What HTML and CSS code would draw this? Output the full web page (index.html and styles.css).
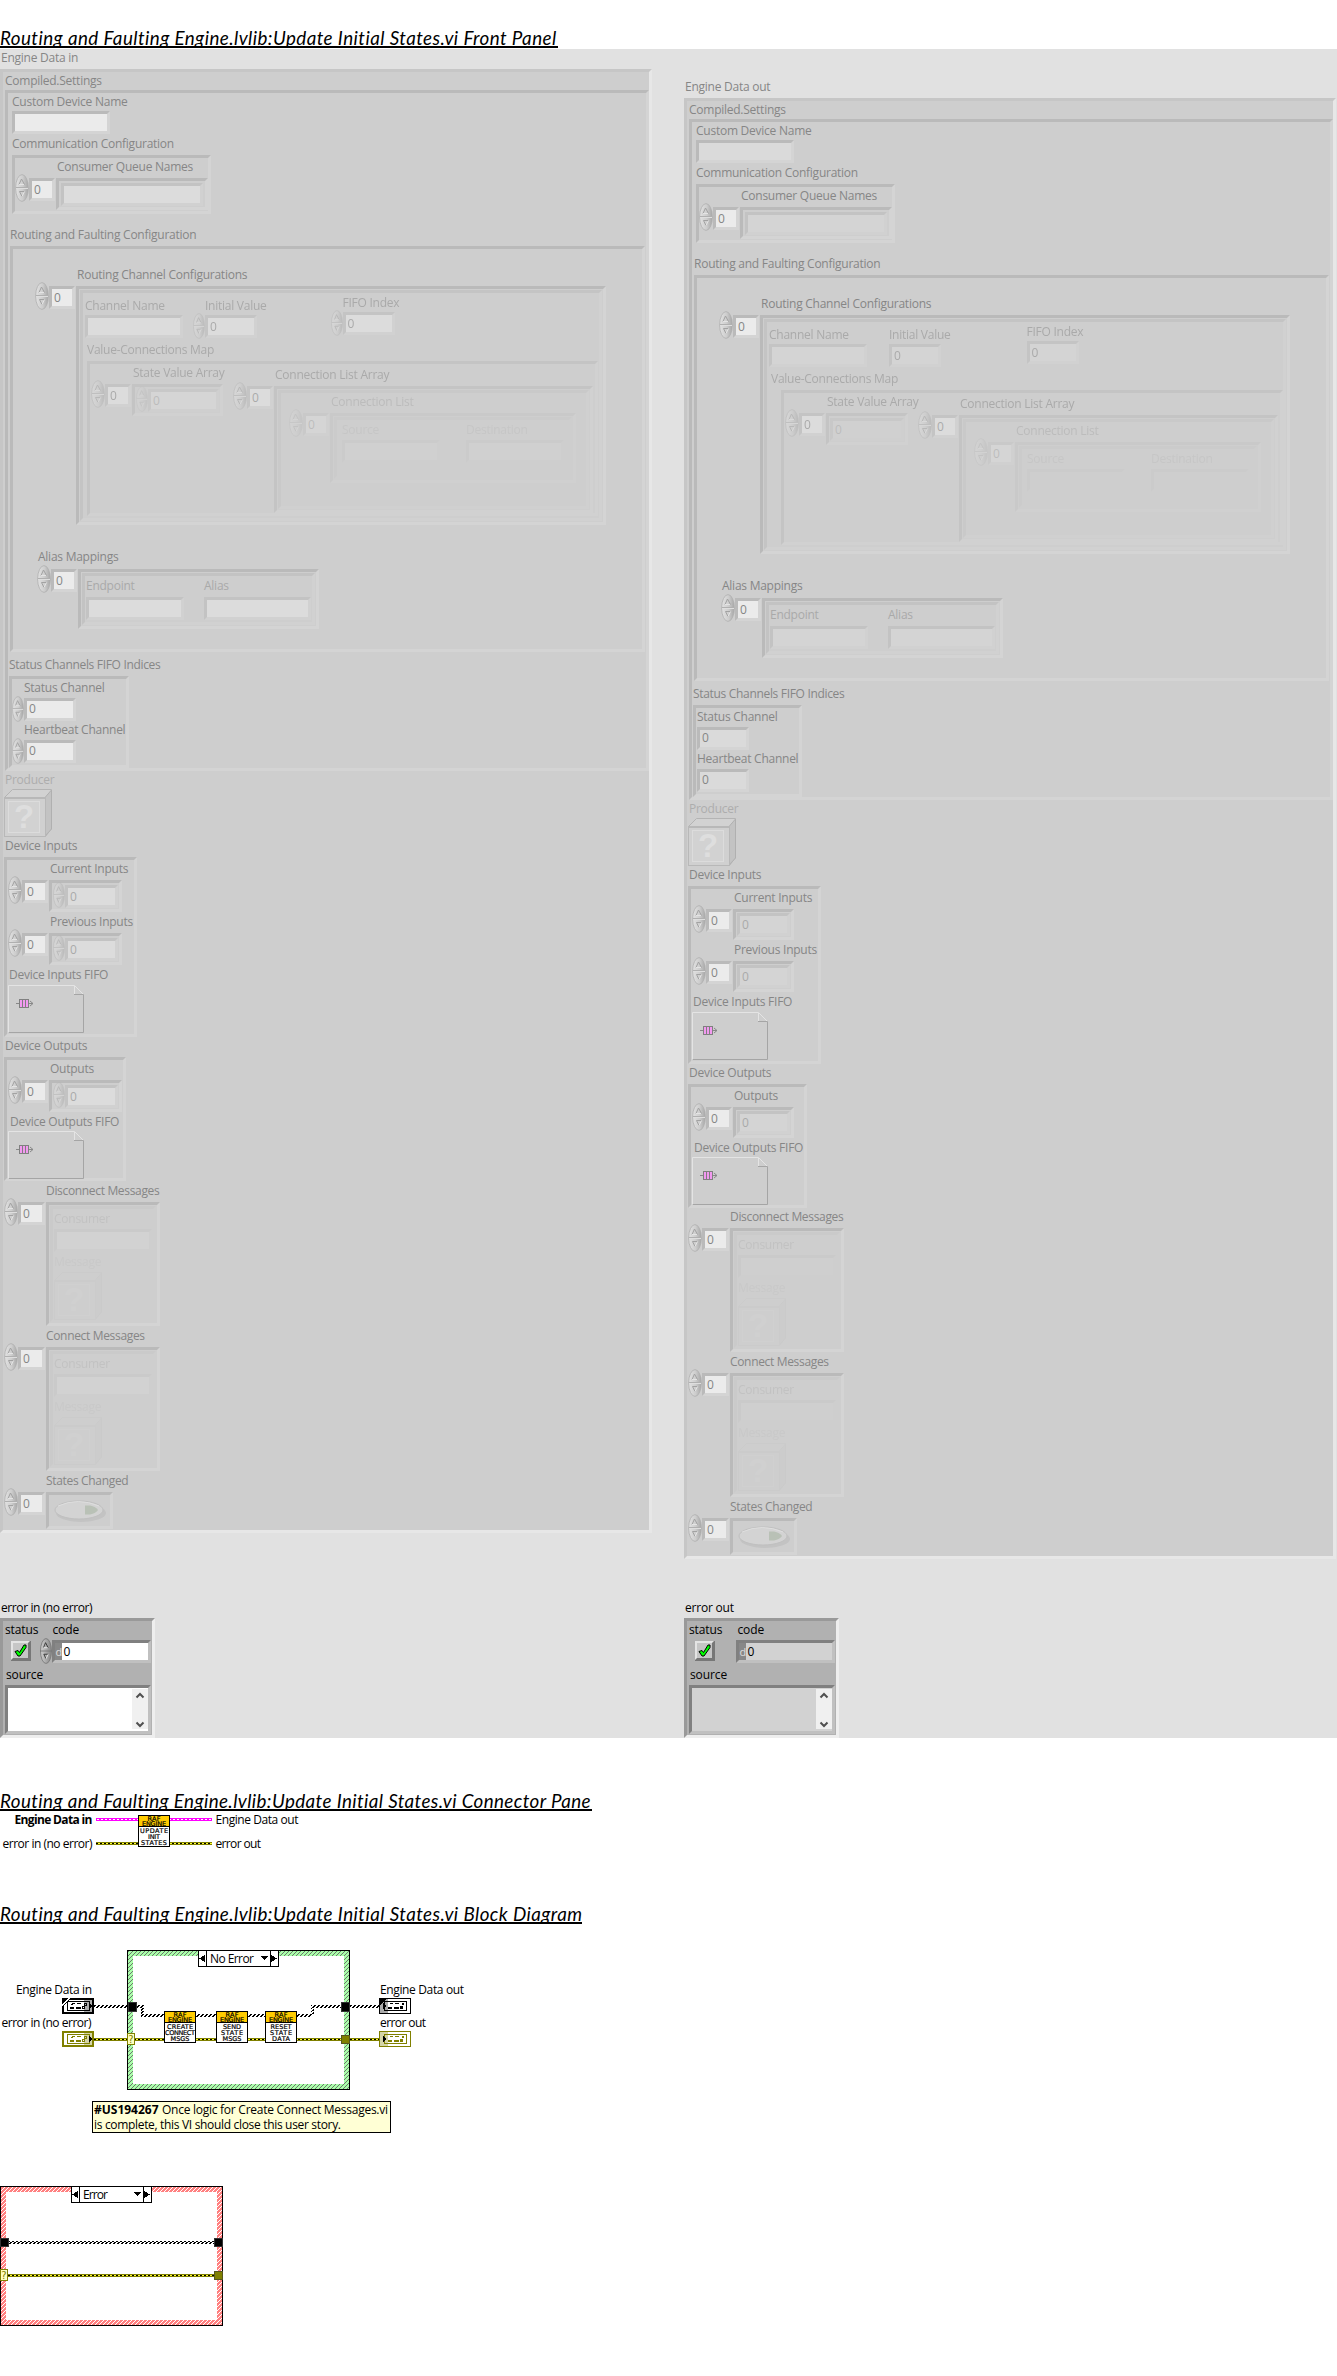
FILE: index.html
```
<!DOCTYPE html>
<html lang="en">
<head>
<meta charset="utf-8">
<title>Update Initial States.vi</title>
<link rel="stylesheet" href="styles.css">
</head>
<body>
<svg class="defs" width="0" height="0">
  <defs>
    <linearGradient id="knob" x1="0" x2="1" y1="0" y2="0"><stop offset="0" stop-color="#e2e2e2"/><stop offset=".55" stop-color="#cdcdcd"/><stop offset="1" stop-color="#a6a6a6"/></linearGradient>
    <linearGradient id="knobdark" x1="0" x2="1" y1="0" y2="0"><stop offset="0" stop-color="#d0d0d0"/><stop offset="1" stop-color="#858585"/></linearGradient>
    <symbol id="spin" viewBox="0 0 14 28" preserveAspectRatio="none"><ellipse cx="7" cy="14" rx="6.4" ry="13.4" fill="url(#knob)" stroke="#b0b0b0" stroke-width=".8"/><path d="M1 13.5h12" stroke="#b0b0b0"/><path d="M1 14.5h12" stroke="#dedede"/><path d="M4 10.500L6.500 5L9.500 10.500M9.500 17.500H4.500L7 22.500" fill="none" stroke="#a2a2a2"/><path d="M9.500 17.500L7 22.500M4 10.500h5" fill="none" stroke="#e4e4e4"/></symbol>
    <symbol id="spindark" viewBox="0 0 14 28" preserveAspectRatio="none"><ellipse cx="7" cy="14" rx="6.4" ry="13.4" fill="url(#knobdark)" stroke="#7a7a7a"/><path d="M0 14h14" stroke="#777"/><path d="M4 10.500L6.500 5L9.500 10.500M9.500 17.500H4.500L7 22.500" fill="none" stroke="#333"/><path d="M9.500 17.500L7 22.500M4 10.500h5" fill="none" stroke="#eee"/></symbol>
    <symbol id="cube" viewBox="0 0 48 48"><path d="M.5 8.500L8.500.5h39v39l-6 8" fill="#d2d2d2" stroke="#b4b4b4"/><path d="M41 8.500L47.500 1v39L41 47z" fill="#c3c3c3" stroke="#b0b0b0"/><rect x=".5" y="8.500" width="41" height="39" fill="#d0d0d0" stroke="#b8b8b8"/><path d="M1 9h40" stroke="#b8b8b8" stroke-width="2"/><rect x="4.500" y="12.500" width="31" height="31" fill="#d2d2d2" stroke="#dcdcdc"/><text x="20" y="39" text-anchor="middle" class="cube-mark">?</text></symbol>
    <symbol id="refnum" viewBox="0 0 76 48"><path d="M.5 47V.5h66L75.500 9.500" fill="none" stroke="#e4e4e4"/><path d="M66.500 1v8" stroke="#e4e4e4"/><path d="M66 9.500h9.500v38H1" fill="none" stroke="#a5a5a5"/><path d="M8 18.500h17M22 16l3 2.500l-3 2.500" fill="none" stroke="#888"/><rect x="11.500" y="14.500" width="9" height="8" fill="#f29af0" stroke="#808080"/><path d="M14.500 14v9M17.500 14v9" stroke="#808080"/></symbol>
    <symbol id="toggle" viewBox="0 0 61 31"><ellipse cx="32" cy="18" rx="25" ry="9" fill="#c3c3c3"/><ellipse cx="30" cy="15" rx="24" ry="9" fill="#d3d3d3" stroke="#c0c0c0"/><path d="M9 11q20-9 41 0" fill="none" stroke="#dedede"/><path d="M36 10.500h5q6 1 8 4.500q-2 3-8 4.500h-5z" fill="#b9c1b6"/></symbol>
    <symbol id="check" viewBox="0 0 20 20"><path d="M0 0h20v20H0z" fill="#777"/><path d="M0 0h19L17 2H2v15l-2 2z" fill="#e4e4e4"/><path d="M2 2h15v15H2z" fill="#c6c6c6"/><path d="M4 10.500l3-1l1.500 2L13 4h2v2.500L9 15H7z" fill="#0f0" stroke="#000"/></symbol>
    <symbol id="scroll" viewBox="0 0 16 40"><path d="M0 0h16v40H0z" fill="#f0f0f0"/><path d="M4.500 8.500L8 5l3.500 3.500M4.500 33.500L8 37l3.500-3.500" fill="none" stroke="#505050" stroke-width="2"/></symbol>
  </defs>
</svg>

<h1 class="title title-front"><span>Routing and Faulting Engine.lvlib:Update Initial States.vi Front Panel</span></h1>

<main class="front-panel">
  <section class="side side-in">
    <div class="label caption">Engine Data in</div>
    <div class="cluster engine">
      <div class="label ind-2">Compiled.Settings</div>
      <div class="cluster compiled">
        <div class="label ind-4">Custom Device Name</div>
        <div class="box text ind-4"></div>
        <div class="label ind-4 after-box">Communication Configuration</div>
        <div class="cluster comm">
          <div class="label over-array">Consumer Queue Names</div>
          <div class="array"><svg class="spin"><use href="#spin"/></svg><div class="box idx">0</div><div class="body queue"><div class="box"></div></div></div>
        </div>
        <div class="label ind-2 routing-label">Routing and Faulting Configuration</div>
        <div class="cluster routing">
          <div class="label over-array channels-label">Routing Channel Configurations</div>
          <div class="array channels"><svg class="spin"><use href="#spin"/></svg><div class="box idx">0</div>
            <div class="body channels-body"><div class="cluster element channel">
              <div class="row fields">
                <div class="field"><div class="label">Channel Name</div><div class="box text"></div></div>
                <div class="field initial"><div class="label">Initial Value</div><div class="row"><svg class="spin small"><use href="#spin"/></svg><div class="box num">0</div></div></div>
                <div class="field fifo"><div class="label">FIFO Index</div><div class="row"><svg class="spin small"><use href="#spin"/></svg><div class="box num">0</div></div></div>
              </div>
              <div class="label map-label">Value-Connections Map</div>
              <div class="cluster row map">
                <div class="state">
                  <div class="label over-array">State Value Array</div>
                  <div class="array"><svg class="spin"><use href="#spin"/></svg><div class="box idx">0</div><div class="body values"><svg class="spin small"><use href="#spin"/></svg><div class="box">0</div></div></div>
                </div>
                <div class="connections">
                  <div class="label over-array">Connection List Array</div>
                  <div class="array"><svg class="spin"><use href="#spin"/></svg><div class="box idx">0</div>
                    <div class="body lists-body"><div class="cluster element lists">
                      <div class="label over-array">Connection List</div>
                      <div class="array"><svg class="spin"><use href="#spin"/></svg><div class="box idx">0</div>
                        <div class="body pairs-body"><div class="cluster element row pairs">
                          <div class="field"><div class="label">Source</div><div class="box text"></div></div>
                          <div class="field"><div class="label">Destination</div><div class="box text"></div></div>
                        </div></div>
                      </div>
                    </div></div>
                  </div>
                </div>
              </div>
            </div></div>
          </div>
          <div class="label alias-label">Alias Mappings</div>
          <div class="array alias"><svg class="spin"><use href="#spin"/></svg><div class="box idx">0</div>
            <div class="body alias-body"><div class="cluster element row aliases">
              <div class="field"><div class="label">Endpoint</div><div class="box text"></div></div>
              <div class="field"><div class="label">Alias</div><div class="box text wide"></div></div>
            </div></div>
          </div>
        </div>
        <div class="label ind-1 status-label">Status Channels FIFO Indices</div>
        <div class="cluster status">
          <div class="label">Status Channel</div>
          <div class="row"><svg class="spin small"><use href="#spin"/></svg><div class="box num">0</div></div>
          <div class="label">Heartbeat Channel</div>
          <div class="row"><svg class="spin small"><use href="#spin"/></svg><div class="box num">0</div></div>
        </div>
      </div>
      <div class="label ind-2 faded">Producer</div>
      <svg class="cube"><use href="#cube"/></svg>
      <div class="label ind-2">Device Inputs</div>
      <div class="cluster device inputs">
        <div class="label over-array">Current Inputs</div>
        <div class="array"><svg class="spin"><use href="#spin"/></svg><div class="box idx">0</div><div class="body numeric"><svg class="spin small"><use href="#spin"/></svg><div class="box">0</div></div></div>
        <div class="label over-array next">Previous Inputs</div>
        <div class="array"><svg class="spin"><use href="#spin"/></svg><div class="box idx">0</div><div class="body numeric"><svg class="spin small"><use href="#spin"/></svg><div class="box">0</div></div></div>
        <div class="label next ind-2">Device Inputs FIFO</div>
        <svg class="refnum"><use href="#refnum"/></svg>
      </div>
      <div class="label ind-2">Device Outputs</div>
      <div class="cluster device outputs">
        <div class="label over-array">Outputs</div>
        <div class="array"><svg class="spin"><use href="#spin"/></svg><div class="box idx">0</div><div class="body numeric"><svg class="spin small"><use href="#spin"/></svg><div class="box">0</div></div></div>
        <div class="label next ind-3">Device Outputs FIFO</div>
        <svg class="refnum"><use href="#refnum"/></svg>
      </div>
      <div class="label over-array first-message">Disconnect Messages</div>
      <div class="array"><svg class="spin"><use href="#spin"/></svg><div class="box idx">0</div>
        <div class="body message"><div class="cluster element"><div class="label">Consumer</div><div class="box text"></div><div class="label faint">Message</div><svg class="cube"><use href="#cube"/></svg></div></div>
      </div>
      <div class="label over-array next">Connect Messages</div>
      <div class="array"><svg class="spin"><use href="#spin"/></svg><div class="box idx">0</div>
        <div class="body message"><div class="cluster element"><div class="label">Consumer</div><div class="box text"></div><div class="label faint">Message</div><svg class="cube"><use href="#cube"/></svg></div></div>
      </div>
      <div class="label over-array next">States Changed</div>
      <div class="array"><svg class="spin"><use href="#spin"/></svg><div class="box idx">0</div><div class="body states"><svg class="toggle"><use href="#toggle"/></svg></div></div>
    </div>
    <div class="label error-label">error in (no error)</div>
    <div class="error">
      <div class="row error-top">
        <div class="field"><div class="label">status</div><svg class="check"><use href="#check"/></svg></div>
        <div class="field code"><div class="label">code</div><div class="row"><svg class="spin small"><use href="#spindark"/></svg><div class="ebox"><i>d</i><b>0</b></div></div></div>
      </div>
      <div class="label source-label">source</div>
      <div class="ebox source"><svg class="scroll"><use href="#scroll"/></svg></div>
    </div>
  </section>

  <section class="side side-out">
    <div class="label caption">Engine Data out</div>
    <div class="cluster engine">
      <div class="label ind-2">Compiled.Settings</div>
      <div class="cluster compiled">
        <div class="label ind-4">Custom Device Name</div>
        <div class="box text ind-4"></div>
        <div class="label ind-4 after-box">Communication Configuration</div>
        <div class="cluster comm">
          <div class="label over-array">Consumer Queue Names</div>
          <div class="array"><svg class="spin"><use href="#spin"/></svg><div class="box idx">0</div><div class="body queue"><div class="box"></div></div></div>
        </div>
        <div class="label ind-2 routing-label">Routing and Faulting Configuration</div>
        <div class="cluster routing">
          <div class="label over-array channels-label">Routing Channel Configurations</div>
          <div class="array channels"><svg class="spin"><use href="#spin"/></svg><div class="box idx">0</div>
            <div class="body channels-body"><div class="cluster element channel">
              <div class="row fields">
                <div class="field"><div class="label">Channel Name</div><div class="box text"></div></div>
                <div class="field initial"><div class="label">Initial Value</div><div class="box num">0</div></div>
                <div class="field fifo"><div class="label">FIFO Index</div><div class="box num">0</div></div>
              </div>
              <div class="label map-label">Value-Connections Map</div>
              <div class="cluster row map">
                <div class="state">
                  <div class="label over-array">State Value Array</div>
                  <div class="array"><svg class="spin"><use href="#spin"/></svg><div class="box idx">0</div><div class="body values"><div class="box">0</div></div></div>
                </div>
                <div class="connections">
                  <div class="label over-array">Connection List Array</div>
                  <div class="array"><svg class="spin"><use href="#spin"/></svg><div class="box idx">0</div>
                    <div class="body lists-body"><div class="cluster element lists">
                      <div class="label over-array">Connection List</div>
                      <div class="array"><svg class="spin"><use href="#spin"/></svg><div class="box idx">0</div>
                        <div class="body pairs-body"><div class="cluster element row pairs">
                          <div class="field"><div class="label">Source</div><div class="box text"></div></div>
                          <div class="field"><div class="label">Destination</div><div class="box text"></div></div>
                        </div></div>
                      </div>
                    </div></div>
                  </div>
                </div>
              </div>
            </div></div>
          </div>
          <div class="label alias-label">Alias Mappings</div>
          <div class="array alias"><svg class="spin"><use href="#spin"/></svg><div class="box idx">0</div>
            <div class="body alias-body"><div class="cluster element row aliases">
              <div class="field"><div class="label">Endpoint</div><div class="box text"></div></div>
              <div class="field"><div class="label">Alias</div><div class="box text wide"></div></div>
            </div></div>
          </div>
        </div>
        <div class="label ind-1 status-label">Status Channels FIFO Indices</div>
        <div class="cluster status">
          <div class="label">Status Channel</div>
          <div class="row"><div class="box num">0</div></div>
          <div class="label">Heartbeat Channel</div>
          <div class="row"><div class="box num">0</div></div>
        </div>
      </div>
      <div class="label ind-2 faded">Producer</div>
      <svg class="cube"><use href="#cube"/></svg>
      <div class="label ind-2">Device Inputs</div>
      <div class="cluster device inputs">
        <div class="label over-array">Current Inputs</div>
        <div class="array"><svg class="spin"><use href="#spin"/></svg><div class="box idx">0</div><div class="body numeric"><div class="box">0</div></div></div>
        <div class="label over-array next">Previous Inputs</div>
        <div class="array"><svg class="spin"><use href="#spin"/></svg><div class="box idx">0</div><div class="body numeric"><div class="box">0</div></div></div>
        <div class="label next ind-2">Device Inputs FIFO</div>
        <svg class="refnum"><use href="#refnum"/></svg>
      </div>
      <div class="label ind-2">Device Outputs</div>
      <div class="cluster device outputs">
        <div class="label over-array">Outputs</div>
        <div class="array"><svg class="spin"><use href="#spin"/></svg><div class="box idx">0</div><div class="body numeric"><div class="box">0</div></div></div>
        <div class="label next ind-3">Device Outputs FIFO</div>
        <svg class="refnum"><use href="#refnum"/></svg>
      </div>
      <div class="label over-array first-message">Disconnect Messages</div>
      <div class="array"><svg class="spin"><use href="#spin"/></svg><div class="box idx">0</div>
        <div class="body message"><div class="cluster element"><div class="label">Consumer</div><div class="box text"></div><div class="label faint">Message</div><svg class="cube"><use href="#cube"/></svg></div></div>
      </div>
      <div class="label over-array next">Connect Messages</div>
      <div class="array"><svg class="spin"><use href="#spin"/></svg><div class="box idx">0</div>
        <div class="body message"><div class="cluster element"><div class="label">Consumer</div><div class="box text"></div><div class="label faint">Message</div><svg class="cube"><use href="#cube"/></svg></div></div>
      </div>
      <div class="label over-array next">States Changed</div>
      <div class="array"><svg class="spin"><use href="#spin"/></svg><div class="box idx">0</div><div class="body states"><svg class="toggle"><use href="#toggle"/></svg></div></div>
    </div>
    <div class="label error-label">error out</div>
    <div class="error">
      <div class="row error-top">
        <div class="field"><div class="label">status</div><svg class="check"><use href="#check"/></svg></div>
        <div class="field code"><div class="label">code</div><div class="ebox"><i>d</i><b>0</b></div></div>
      </div>
      <div class="label source-label">source</div>
      <div class="ebox source"><svg class="scroll"><use href="#scroll"/></svg></div>
    </div>
  </section>
</main>

<h2 class="title title-pane"><span>Routing and Faulting Engine.lvlib:Update Initial States.vi Connector Pane</span></h2>

<svg class="pane" width="1337" height="49" viewBox="0 1811 1337 49">
  <g class="t">
    <text x="14.500" y="1824" textLength="78" class="bold">Engine Data in</text>
    <text x="2.500" y="1848" textLength="90">error in (no error)</text>
    <text x="215.500" y="1824" textLength="83">Engine Data out</text>
    <text x="215.500" y="1848" textLength="45.500">error out</text>
  </g>
  <path class="pink" d="M96 1819.500H212"/><path class="pink-dots" d="M97 1819.500H212"/>
  <path class="olive" d="M96 1843.500H212"/><path class="lemon" d="M96 1843.500H212"/><path class="dots" d="M96 1843.500H212"/>
  <g class="vi" transform="translate(138 1815)"><path d="M.5.5h31v31H.5z" fill="#fff" stroke="#000"/><path d="M1 1h30v10H1z" fill="#fc0"/><path d="M0 11.500h32" stroke="#000"/><text x="16" y="6" textLength="13">RAF</text><text x="16" y="11" textLength="24">ENGINE</text><text x="16" y="18" textLength="28">UPDATE</text><text x="16" y="24" textLength="12">INIT</text><text x="16" y="30" textLength="26">STATES</text></g>
</svg>

<h2 class="title title-diagram"><span>Routing and Faulting Engine.lvlib:Update Initial States.vi Block Diagram</span></h2>

<svg class="diagram" width="1337" height="452" viewBox="0 1924 1337 452">
  <defs>
    <pattern id="hgreen" width="4" height="4" patternUnits="userSpaceOnUse"><path d="M0 0h4v4H0z" fill="#afa"/><path d="M3 0h1v1h-1zM2 1h1v1h-1zM1 2h1v1h-1zM0 3h1v1h-1z" fill="#6c786c"/></pattern>
    <pattern id="hred" width="4" height="4" patternUnits="userSpaceOnUse"><path d="M0 0h4v4H0z" fill="#ff8080"/><path d="M3 0h1v1h-1zM2 1h1v1h-1zM1 2h1v1h-1zM0 3h1v1h-1z" fill="#fff"/></pattern>
    <pattern id="wire" width="4" height="3" y="2005" patternUnits="userSpaceOnUse"><path d="M2 0h2v1h-2zM1 1h2v1h-2zM0 2h2v1h-2z"/></pattern>
    <g id="term"><path d="M5.500 3.500h22v9h-22zM1 1h30v14H1z" fill="none" stroke="currentColor"/><path d="M8 9h4v2H8zM14 9h5v2h-5zM10 5h3v1h-3zM15 5h4v1h-4zM9 6h2v1H9z" fill="currentColor"/><path d="M22.500 5.500h2v2h-2zM20.500 8.500h2v2h-2z" fill="none" stroke="currentColor"/></g>
    <g id="sub"><path d="M.5.5h31v31H.5z" fill="#fff" stroke="#000"/><path d="M1 1h30v10H1z" fill="#fc0"/><path d="M0 11.500h32" stroke="#000"/></g>
  </defs>

  <!-- No Error case -->
  <path d="M127.500 1950.500h222v139h-222z" fill="url(#hgreen)" stroke="#000"/>
  <path d="M133 1956h211v128H133z" fill="#fff"/>
  <g id="selector"><path d="M198.500 1950.500h80v16h-80z" fill="#fff" stroke="#000"/><path d="M206.500 1950v17M270.500 1950v17" stroke="#000"/><path d="M205 1955v7l-6-3.500zM271 1955v7l6-3.500zM261 1956h7l-3.500 4z"/></g>
  <text class="t" x="210" y="1963" textLength="44">No Error</text>

  <path d="M94 2005h47v3H94zM141 2005h2.500v9H141zM141 2014h23v3h-23zM196 2014h20v3h-20zM248 2014h17v3h-17zM297 2014h14v3h-14zM310.500 2005h3v10h-3zM311 2005h68v3h-68z" fill="url(#wire)"/>
  <path class="olive" d="M94 2039.500H379"/><path class="lemon" d="M94 2039.500H379"/><path class="dots" d="M94 2039.500H379"/>

  <path d="M128 2002h8v9h-8zM341.500 2002h8v9h-8z" fill="#000" stroke="#333"/>
  <path d="M127.500 2033.500h7v11h-7z" fill="#ffffc0" stroke="#808000"/><text class="q" x="131" y="2043">?</text>
  <path d="M341.500 2035.500h8v8h-8z" fill="#808000" stroke="#555520"/>

  <g class="vi"><g transform="translate(164 2011)"><use href="#sub"/><text x="16" y="6" textLength="13">RAF</text><text x="16" y="11" textLength="24">ENGINE</text><text x="16" y="18" textLength="26">CREATE</text><text x="16" y="24" textLength="30">CONNECT</text><text x="16" y="30" textLength="19">MSGS</text></g>
  <g transform="translate(216 2011)"><use href="#sub"/><text x="16" y="6" textLength="13">RAF</text><text x="16" y="11" textLength="24">ENGINE</text><text x="16" y="18" textLength="18">SEND</text><text x="16" y="24" textLength="22">STATE</text><text x="16" y="30" textLength="19">MSGS</text></g>
  <g transform="translate(265 2011)"><use href="#sub"/><text x="16" y="6" textLength="13">RAF</text><text x="16" y="11" textLength="24">ENGINE</text><text x="16" y="18" textLength="21">RESET</text><text x="16" y="24" textLength="22">STATE</text><text x="16" y="30" textLength="18">DATA</text></g></g>

  <g transform="translate(62 1998)" color="#000"><path d="M0 0h32v16H0z"/><path d="M2 2h28v12H2z" fill="#fff"/><path d="M22 2h8v12h-8z" fill="#aaa"/><use href="#term"/><path d="M27 5v6l4-3zM0 0h9L0 9z"/><path d="M0 7.500L7.500 0" stroke="#fff"/></g>
  <g transform="translate(62 2031)" color="#808000"><path d="M0 0h32v16H0z" fill="#808000"/><path d="M2 2h28v12H2z" fill="#fff"/><path d="M22 2h8v12h-8z" fill="#d4d4a8"/><use href="#term"/><path d="M27 5v6l4-3z"/></g>
  <g transform="translate(379 1998)" color="#000"><path d="M.5.5h31v15H.5z" fill="#fff" stroke="#000"/><path d="M1 1h8v14H1z" fill="#aaa"/><g transform="translate(1 0)"><path d="M4.500 3.500h22v9h-22z" fill="none" stroke="#000"/><path d="M8 9h4v2H8zM14 9h5v2h-5zM10 5h3v1h-3zM15 5h4v1h-4zM22 5h2v2h-2zM20 8h3v3h-3z"/></g><path d="M4 5v6l4-3zM0 0h8L0 8z"/></g>
  <g transform="translate(379 2031)" color="#808000"><path d="M.5.5h31v15H.5z" fill="#fff" stroke="#808000"/><path d="M1 1h8v14H1z" fill="#d4d4a8"/><g transform="translate(1 0)" fill="#808000"><path d="M4.500 3.500h22v9h-22z" fill="none" stroke="#808000"/><path d="M8 9h4v2H8zM14 9h5v2h-5zM10 5h3v1h-3zM15 5h4v1h-4zM22 5h2v2h-2zM20 8h3v3h-3z"/></g><path d="M4 5v6l4-3z"/></g>

  <g class="t">
    <text x="16" y="1994" textLength="76">Engine Data in</text>
    <text x="1.500" y="2027" textLength="90">error in (no error)</text>
    <text x="380" y="1994" textLength="84">Engine Data out</text>
    <text x="380" y="2027" textLength="46">error out</text>
  </g>

  <path d="M92.500 2101.500h298v31h-298z" fill="#ffffd5" stroke="#000"/>
  <g class="t"><text x="94" y="2114" textLength="64.500" class="bold">#US194267</text><text x="162" y="2114" textLength="226">Once logic for Create Connect Messages.vi</text><text x="94" y="2129" textLength="247">is complete, this VI should close this user story.</text></g>

  <!-- Error case -->
  <path d="M.5 2186.500h222v139H.5z" fill="url(#hred)" stroke="#000"/>
  <path d="M6 2192h211v128H6z" fill="#fff"/>
  <use href="#selector" transform="translate(-127 236)"/>
  <text class="t" x="83" y="2199" textLength="25">Error</text>
  <path d="M9 2241h205v3H9z" fill="url(#wire)"/>
  <path class="olive" d="M8 2275.500H214"/><path class="lemon" d="M8 2275.500H214"/><path class="dots" d="M8 2275.500H214"/>
  <path d="M.5 2238.500h8v8h-8zM214.500 2238.500h8v8h-8z" fill="#000" stroke="#333"/>
  <path d="M.5 2269.500h7v11h-7z" fill="#ffffc0" stroke="#808000"/><text class="q" x="4" y="2279">?</text>
  <path d="M214.500 2271.500h8v8h-8z" fill="#808000" stroke="#555520"/>
</svg>
</body>
</html>
```
FILE: styles.css
```
* { box-sizing: border-box; }
body { margin: 0; width: 1337px; background: #fff; color: #000; font: 12px "Open Sans", "Noto Sans", sans-serif; }
svg { display: block; flex: none; }
.defs { height: 0; }

/* Section titles: the rule sits tight under the text */
.title { margin: 0; font: italic 18.800px/23px Lato, sans-serif; letter-spacing: .43px; white-space: nowrap; }
.title span { display: block; height: 22px; overflow-y: clip; border-bottom: 2px solid #000; }
.title-front { height: 49px; padding-top: 26px; }
.title-front span { width: 558px; }
.title-pane { height: 73px; padding-top: 51px; letter-spacing: .4px; }
.title-pane span { width: 592px; }
.title-diagram { height: 64px; padding-top: 42px; }
.title-diagram span { width: 582px; }

/* Front panel */
.front-panel { display: flex; gap: 32px; height: 1689px; background: #e1e1e1; color: #868686; }
.side { display: flex; flex-direction: column; width: 652px; }
.label { height: 18px; line-height: 18px; white-space: nowrap; letter-spacing: -.25px; flex: none; }
.caption { padding-left: 1px; margin-bottom: 2px; }
.side-out .caption { margin-top: 29px; }
.row { display: flex; align-items: flex-start; }
.cluster, .body, .box { border: 3px solid; border-color: #bababa #d4d4d4 #d4d4d4 #bababa; flex: none; }
.cluster { display: flex; flex-direction: column; align-items: flex-start; }
.cluster.row { flex-direction: row; }
.ind-1 { margin-left: 1px; }
.ind-2 { margin-left: 2px; }
.ind-3 { margin-left: 3px; }
.ind-4 { margin-left: 4px; }

.box { height: 23px; background: #ebebeb; line-height: 17px; padding-left: 2px; }
.side-out .box { background: #dadada; }
.side .idx { width: 26px; background: #ebebeb; }
.text { width: 98px; }
.text.wide { width: 107px; }
.num { width: 52px; }
.spin { width: 14px; height: 28px; margin-top: -4px; }
.spin.small { width: 12px; height: 26px; margin-top: -2px; }

.array { display: flex; align-items: flex-start; margin-top: 2px; }
.over-array { margin-left: 42px; }
.body { display: flex; align-items: center; justify-content: center; margin-left: 1px; }
.body > * { opacity: .5; }
.element { width: calc(100% - 2px); height: calc(100% - 2px); }
.next { margin-top: 1px; }

.engine { width: 652px; height: 1464px; background: #cecece; border-color: #c6c6c6 #e7e7e7 #e7e7e7 #c6c6c6; }
.side-out .engine { height: 1461px; }
.compiled { width: 644px; height: 681px; margin-left: 2px; }
.after-box { margin-top: 1px; }
.comm { width: 199px; height: 59px; margin: 2px 0 0 4px; }
.queue { width: 152px; height: 32px; }
.queue .box { width: 142px; }
.routing-label { margin-top: 12px; }
.routing { width: 635px; height: 406px; margin: 2px 0 0 2px; }
.channels-label { margin: 17px 0 0 64px; }
.channels { margin-left: 22px; }
.channels-body { width: 530px; height: 239px; }
.fields { height: 48px; width: 100%; padding-left: 2px; }
.fields .field { margin-top: 4px; }
.fields .initial { margin-left: 10px; }
.initial .label, .fifo .label { padding-left: 12px; }
.fields .fifo { margin: 1px 0 0 64px; }
.side-out .fields .initial { margin-left: 22px; }
.side-out .fields .fifo { margin-left: 76px; }
.side-out .initial .label, .side-out .fifo .label { padding-left: 0; }
.map-label { margin-left: 4px; }
.map { width: 511px; height: 155px; margin: 2px 0 0 4px; }
.side-out .map { width: 502px; margin-left: 14px; }
.state { width: 143px; padding-left: 1px; }
.side-out .state { width: 134px; }
.values { width: 91px; height: 32px; }
.values .box { width: 71px; }
.side-out .values { width: 82px; }
.side-out .values .box { width: 74px; }
.connections { padding-top: 2px; }
.lists-body { width: 319px; height: 127px; }
.lists { padding-left: 8px; }
.pairs-body { width: 246px; height: 70px; }
.pairs { padding: 1px 0 0 5px; gap: 26px; opacity: .4; }
.pairs .label { height: 19px; }
.alias-label { margin: 23px 0 1px 25px; }
.alias { margin-left: 24px; }
.alias-body { width: 241px; height: 60px; }
.aliases { padding: 1px 0 0 1px; gap: 20px; }
.aliases .label { height: 20px; }
.status-label { margin-top: 4px; letter-spacing: -.32px; }
.status { width: 120px; height: 92px; margin: 2px 0 0 1px; }
.status .label { padding-left: 12px; }
.status .label + .row { margin-top: 1px; }
.status .row { height: 23px; }
.status .num { line-height: 16px; }
.side-out .status { width: 109px; }
.side-out .status .label { padding-left: 1px; }
.side-out .status .row { padding-left: 1px; }

.faded { opacity: .45; }
.cube { width: 48px; height: 48px; margin-left: 1px; }
.cube-mark { font: bold 33px "Liberation Sans", sans-serif; fill: #dedede; }
.device { margin: 2px 0 0 1px; }
.inputs { width: 133px; height: 180px; }
.side-out .inputs { height: 178px; }
.outputs { width: 122px; height: 124px; }
.side-out .outputs { width: 119px; }
.device .array { margin-left: 1px; }
.numeric { width: 73px; height: 32px; }
.numeric .box { width: 53px; }
.side-out .numeric { width: 61px; height: 31px; }
.device .over-array { margin-left: 43px; }
.refnum { width: 76px; height: 48px; margin: 1px 0 0 1px; }
.outputs .refnum { margin-top: 0; }
.first-message { margin-top: 1px; }
.side-out .first-message { margin-top: 0; }
.engine > .over-array { margin-left: 43px; letter-spacing: -.33px; }
.engine > .array { padding-left: 1px; }
.engine > .array > .idx { width: 27px; }
.message { width: 114px; height: 124px; }
.message .element { opacity: .16; padding-left: 1px; }
.message .label { height: 20px; padding-top: 1px; }
.message .faint { opacity: .4; }
.message .cube { margin-left: 0; opacity: .8; }
.states { width: 67px; height: 37px; }
.states .toggle { opacity: 1; width: 61px; height: 31px; }

/* Error clusters */
.error-label { color: #000; padding-left: 1px; margin-top: 66px; letter-spacing: -.4px; }
.side-out .error-label { margin-top: 40px; letter-spacing: -.2px; }
.error { width: 155px; height: 121px; margin-top: 1px; background: #b1b1b1; color: #000; border: 3px solid; border-color: #999 #eee #eee #999; }
.error .label { letter-spacing: -.1px; }
.error-top { height: 45px; padding-left: 2px; }
.check { width: 20px; height: 20px; margin: 2px 0 0 6px; }
.code { margin-left: 2px; }
.code .label { padding-left: 12px; }
.code .label + * { margin-top: 1px; }
.side-out .code { margin-left: 14px; }
.side-out .code .label { padding-left: 1px; }
.ebox { display: flex; width: 99px; height: 23px; border: 3px solid; border-color: #808080 #c0c0c0 #c0c0c0 #808080; background: #fff; line-height: 17px; }
.side-out .ebox { background: #d2d2d2; }
.ebox i { width: 7px; background: #888; color: #ddd; font-style: normal; font-size: 11px; }
.ebox b { font-weight: normal; padding-left: 1px; }
.source-label { padding-left: 3px; margin-bottom: 1px; }
.source { width: 146px; height: 49px; margin-left: 2px; justify-content: flex-end; }
.scroll { width: 16px; height: 40px; margin-top: 1px; }

/* Diagrams */
.pane, .diagram { shape-rendering: crispEdges; }
.t { font: 12px "Open Sans", "Noto Sans", sans-serif; fill: #000; }
.bold { font-weight: bold; }
.vi text { font: 6.500px "DejaVu Sans", sans-serif; text-anchor: middle; stroke: #000; stroke-width: .2px; }
.q { font: 10px "DejaVu Sans", sans-serif; fill: #808000; text-anchor: middle; }
.pink { stroke: #f0f; stroke-width: 3; }
.pink-dots { stroke: #fff; stroke-dasharray: 2 2; }
.olive { stroke: #808000; stroke-width: 3; }
.lemon { stroke: #ff3; }
.dots { stroke: #000; stroke-dasharray: 2 2; }
```
